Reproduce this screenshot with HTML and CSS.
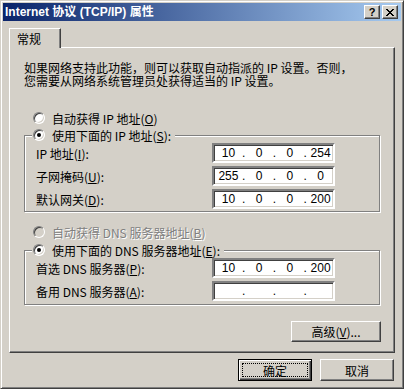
FILE: index.html
```html
<!DOCTYPE html>
<html lang="zh-CN">
<head>
  <meta charset="UTF-8" />
  <title>Internet 协议 (TCP/IP) 属性</title>
  <link rel="stylesheet" href="styles.css">
</head>
<body>
  <div class="window">
    <div class="titlebar">
      <span class="title">Internet 协议 (TCP/IP) 属性</span>
      <div class="tbtns">
        <div class="tbtn help">?</div>
        <div class="tbtn">
          <svg width="8" height="7" viewBox="0 0 8 7"><path d="M0 0h2v1h1v1h2v-1h1v-1h2v1h-1v1h-1v1h-1v1h1v1h1v1h1v1h-2v-1h-1v-1h-2v1h-1v1h-2v-1h1v-1h1v-1h1v-1h-1v-1h-1v-1h-1z" fill="#000"/></svg>
        </div>
      </div>
    </div>

    <div class="content">
      <div class="tabs"><div class="tab">常规</div></div>
      <div class="panel">
        <div class="desc">
          <div class="desc-line">如果网络支持此功能，则可以获取自动指派的 IP 设置。否则，</div>
          <div class="desc-line">您需要从网络系统管理员处获得适当的 IP 设置。</div>
        </div>

        <div class="radio-row"><span class="radio"></span><span>自动获得 IP 地址(<u>O</u>)</span></div>

        <div class="group">
          <div class="group-head"><span class="radio on"></span><span>使用下面的 IP 地址(<u>S</u>):</span></div>
          <div class="rows">
            <span class="label">IP 地址(<u>I</u>):</span>
            <div class="ipbox"><span class="seg">10</span><span class="dot">.</span><span class="seg">0</span><span class="dot">.</span><span class="seg">0</span><span class="dot">.</span><span class="seg">254</span></div>
            <span class="label">子网掩码(<u>U</u>):</span>
            <div class="ipbox"><span class="seg">255</span><span class="dot">.</span><span class="seg">0</span><span class="dot">.</span><span class="seg">0</span><span class="dot">.</span><span class="seg">0</span></div>
            <span class="label">默认网关(<u>D</u>):</span>
            <div class="ipbox"><span class="seg">10</span><span class="dot">.</span><span class="seg">0</span><span class="dot">.</span><span class="seg">0</span><span class="dot">.</span><span class="seg">200</span></div>
          </div>
        </div>

        <div class="radio-row disabled"><span class="radio off"></span><span>自动获得 DNS 服务器地址(<u>B</u>)</span></div>

        <div class="group dns">
          <div class="group-head"><span class="radio on"></span><span>使用下面的 DNS 服务器地址(<u>E</u>):</span></div>
          <div class="rows">
            <span class="label">首选 DNS 服务器(<u>P</u>):</span>
            <div class="ipbox"><span class="seg">10</span><span class="dot">.</span><span class="seg">0</span><span class="dot">.</span><span class="seg">0</span><span class="dot">.</span><span class="seg">200</span></div>
            <span class="label">备用 DNS 服务器(<u>A</u>):</span>
            <div class="ipbox"><span class="seg"></span><span class="dot">.</span><span class="seg"></span><span class="dot">.</span><span class="seg"></span><span class="dot">.</span><span class="seg"></span></div>
          </div>
        </div>

        <button class="btn adv">高级(<u>V</u>)...</button>
      </div>

      <div class="footer">
        <button class="btn default">确定</button>
        <button class="btn">取消</button>
      </div>
    </div>
  </div>
</body>
</html>
```

FILE: styles.css
```css
* {
  box-sizing: border-box;
}
body {
  margin: 0;
  background: #d4d0c8;
  font: 12px "Noto Sans CJK SC", sans-serif;
  color: #000;
}
.window {
  width: 404px;
  height: 389px;
  background: #d4d0c8;
  border: 1px solid;
  border-color: #d4d0c8 #404040 #404040 #d4d0c8;
  box-shadow: inset 1px 1px #fff, inset -1px -1px #808080;
  padding: 2px;
}
.titlebar {
  height: 18px;
  display: flex;
  align-items: center;
  justify-content: space-between;
  padding: 0 3px 0 2px;
  background: linear-gradient(to right, #0a246a, #a6caf0);
}
.title {
  color: #fff;
  font: bold 12px "Liberation Sans", "Noto Sans CJK SC", sans-serif;
  line-height: 18px;
}
.tbtns {
  display: flex;
  gap: 2px;
}
.tbtn {
  width: 16px;
  height: 14px;
  background: #d4d0c8;
  border: 1px solid;
  border-color: #fff #404040 #404040 #fff;
  box-shadow: inset -1px -1px #808080;
  display: flex;
  align-items: center;
  justify-content: center;
}
.help {
  font: bold 11px "Liberation Sans", sans-serif;
  line-height: 12px;
}
.content {
  padding: 7px 6px 0 6px;
}
.tabs {
  display: flex;
}
.tab {
  position: relative;
  z-index: 1;
  width: 52px;
  height: 20px;
  margin-bottom: -1px;
  padding: 2px 0 0 7px;
  background: #d4d0c8;
  border: 1px solid;
  border-bottom: none;
  border-color: #fff #404040 #404040 #fff;
  box-shadow: inset -1px 0 #808080;
  line-height: 16px;
}
.panel {
  height: 306px;
  border: 1px solid;
  border-color: #fff #404040 #404040 #fff;
  box-shadow: inset -1px -1px #808080;
  padding: 0 14px 0 14px;
  display: flex;
  flex-direction: column;
}
.desc {
  margin-top: 13px;
}
.desc-line {
  height: 13px;
  line-height: 13px;
  white-space: nowrap;
}
.radio-row {
  display: flex;
  align-items: center;
  gap: 7px;
  height: 16px;
  margin-top: 23px;
  padding-left: 9px;
}
.radio {
  position: relative;
  flex: none;
  width: 12px;
  height: 12px;
  border-radius: 50%;
  background: #fff;
  border: 1px solid;
  border-color: #808080 #fff #fff #808080;
  box-shadow: inset 1px 1px #404040, inset -1px -1px #d4d0c8;
}
.radio.on::after {
  content: "";
  position: absolute;
  left: 3px;
  top: 3px;
  width: 4px;
  height: 4px;
  border-radius: 50%;
  background: #000;
}
.radio.off {
  background: #d4d0c8;
}
.disabled {
  color: #808080;
  text-shadow: 1px 1px #fff;
  margin-top: 12px;
}
.group {
  margin-top: 9px;
  border: 1px solid #808080;
  box-shadow: inset 1px 1px #fff, 1px 1px #fff;
  padding-bottom: 2px;
}
.group.dns {
  margin-top: 10px;
  padding-bottom: 3px;
}
.group-head {
  display: flex;
  align-items: center;
  gap: 7px;
  width: fit-content;
  height: 14px;
  margin: -8px 0 0 7px;
  padding: 0 4px 0 1px;
  background: #d4d0c8;
}
.rows {
  display: grid;
  grid-template-columns: 176px 123px;
  grid-auto-rows: 20px;
  row-gap: 3px;
  align-items: center;
  margin-top: 1px;
  padding-left: 11px;
}
.ipbox {
  display: flex;
  align-items: center;
  height: 20px;
  background: #fff;
  border: 2px solid;
  border-color: #808080 #fff #fff #808080;
  box-shadow: inset 1px 1px #404040, inset -1px -1px #d4d0c8;
  padding-left: 2px;
  font: 12px "Liberation Sans", sans-serif;
}
.seg {
  width: 25px;
  text-align: center;
}
.dot {
  width: 6px;
  text-align: center;
}
.btn {
  position: relative;
  background: #d4d0c8;
  border: 1px solid;
  border-color: #fff #404040 #404040 #fff;
  box-shadow: inset -1px -1px #808080;
  font: 12px "Noto Sans CJK SC", sans-serif;
  color: #000;
  padding: 0;
}
.adv {
  align-self: flex-end;
  width: 90px;
  height: 21px;
  margin: 16px -1px 0 0;
}
.footer {
  display: flex;
  justify-content: flex-end;
  gap: 8px;
  margin-top: 6px;
  padding-right: 1px;
}
.footer .btn {
  width: 74px;
  height: 22px;
}
.btn.default {
  border: 1px solid #000;
  box-shadow: inset 1px 1px #fff, inset -1px -1px #404040, inset -2px -2px #808080;
}
.btn.default::after {
  content: "";
  position: absolute;
  left: 3px;
  top: 3px;
  right: 3px;
  bottom: 3px;
  border: 1px dotted #000;
}
```
